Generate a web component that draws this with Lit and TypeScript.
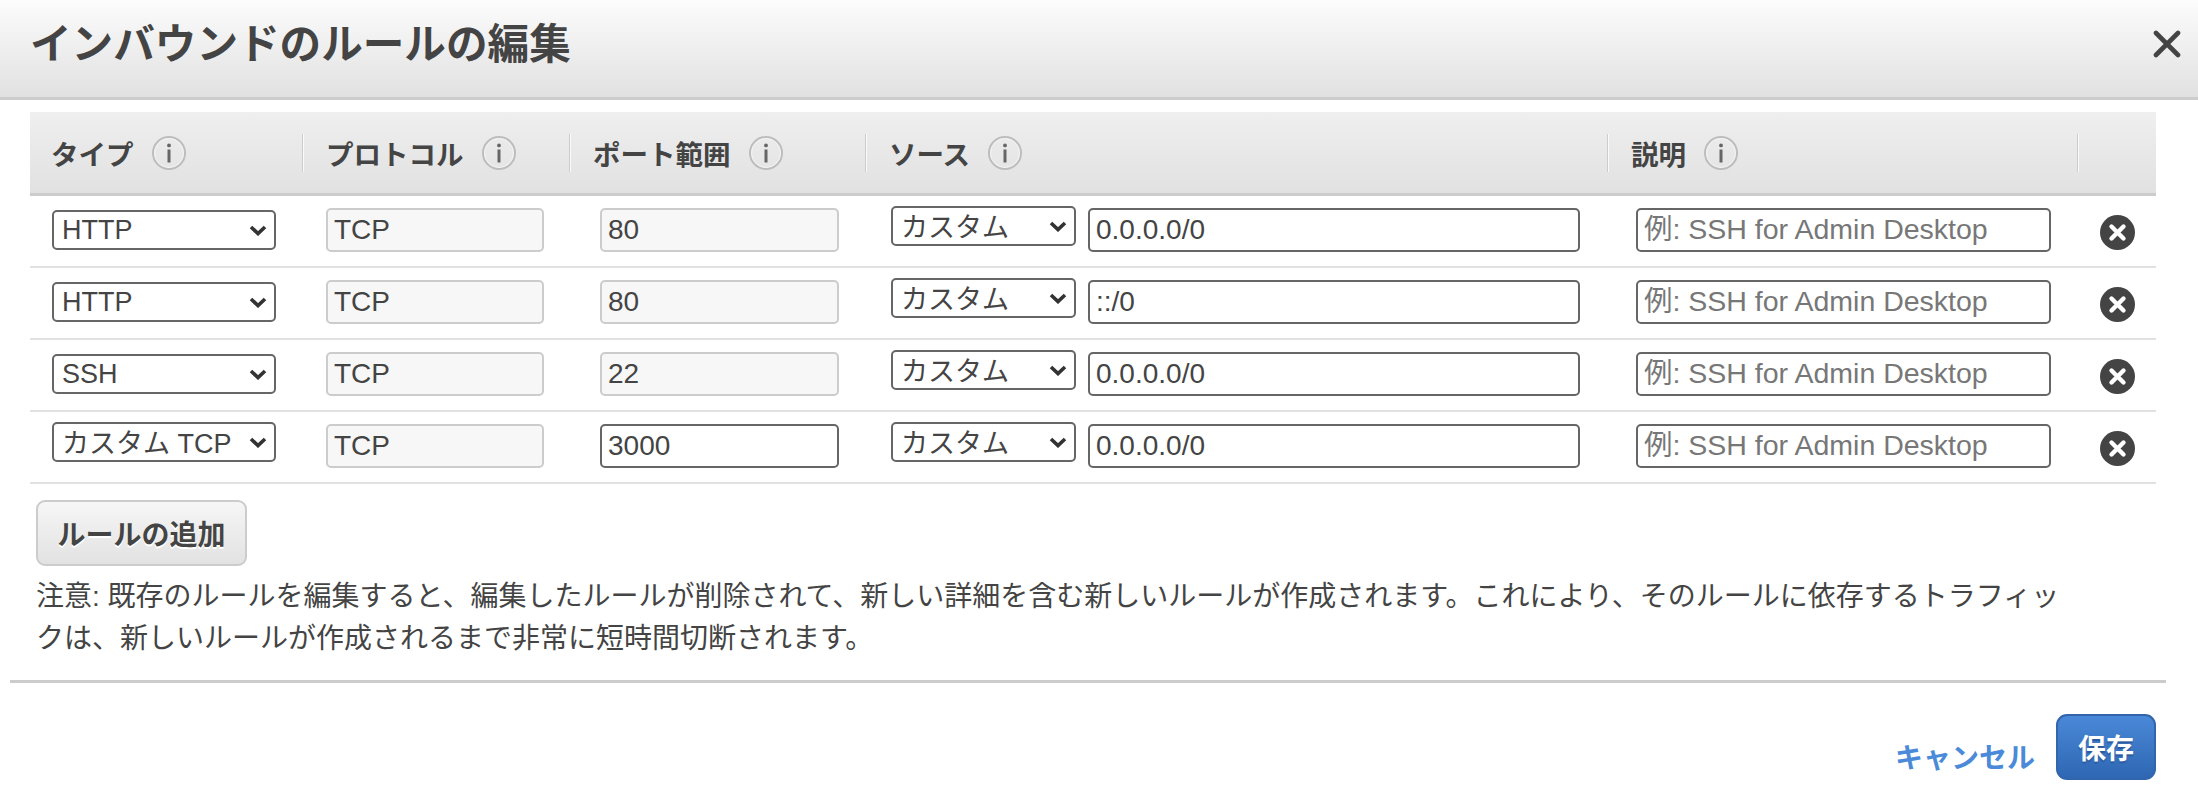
import { LitElement, html, css, svg } from 'lit';
import { customElement } from 'lit/decorators.js';

interface Rule {
  type: string;
  port: string;
  source: string;
  portEditable?: boolean;
}

const RULES: Rule[] = [
  { type: 'HTTP', port: '80', source: '0.0.0.0/0' },
  { type: 'HTTP', port: '80', source: '::/0' },
  { type: 'SSH', port: '22', source: '0.0.0.0/0' },
  { type: 'カスタム TCP', port: '3000', source: '0.0.0.0/0', portEditable: true },
];

const COLUMNS = ['タイプ', 'プロトコル', 'ポート範囲', 'ソース', '説明'];

const infoIcon = svg`<svg class="info" width="34" height="34" viewBox="0 0 34 34">
  <circle cx="17" cy="17" r="16" fill="none" stroke="#bdbdbd" stroke-width="2"/>
  <circle cx="17" cy="17" r="14.5" fill="none" stroke="#f4f4f4" stroke-width="1"/>
  <rect x="15.5" y="13.5" width="3" height="13" fill="#666"/>
  <circle cx="17" cy="9.4" r="1.9" fill="#666"/>
</svg>`;

const removeIcon = svg`<svg width="35" height="35" viewBox="0 0 35 35">
  <circle cx="17.5" cy="17.5" r="17.5" fill="#444"/>
  <path d="M11.5 11.5 23.5 23.5M23.5 11.5 11.5 23.5" stroke="#fff" stroke-width="4.4" stroke-linecap="round"/>
</svg>`;

const chevron = "url(\"data:image/svg+xml,%3Csvg xmlns='http://www.w3.org/2000/svg' width='18' height='11' viewBox='0 0 18 11'%3E%3Cpath d='M2 2 9 8.6 16 2' fill='none' stroke='%23333' stroke-width='3.6'/%3E%3C/svg%3E\")";

@customElement('app-root')
export class AppRoot extends LitElement {
  static styles = css`
    :host {
      display: block;
      height: 796px;
      overflow: hidden;
      background: #fff;
      color: #444;
      font-family: "Liberation Sans", "Noto Sans CJK JP", sans-serif;
      font-size: 28px;
    }

    .modal-header {
      display: flex;
      align-items: center;
      justify-content: space-between;
      box-sizing: border-box;
      height: 100px;
      padding: 0 17px 16px 30px;
      background: linear-gradient(#fcfcfc, #e1e1e1);
      border-bottom: 3px solid #ccc;
    }

    h1 {
      margin: 0;
      font-size: 41.6px;
      font-weight: 700;
      color: #444;
    }

    .close {
      display: block;
      margin-top: 7px;
    }

    .modal-body {
      padding: 12px 42px 0 30px;
    }

    .grid {
      display: grid;
      grid-template-columns: 272px 267px 296px 742px 470px 79px;
    }

    .head {
      box-sizing: border-box;
      height: 84px;
      background: linear-gradient(#efefef, #e1e1e1);
      border-bottom: 3px solid #ccc;
      align-items: center;
    }

    .head-cell {
      display: flex;
      align-items: center;
      gap: 18px;
      height: 38px;
      padding-left: 23px;
      font-size: 27.5px;
      font-weight: 700;
      color: #444;
      border-left: 1px solid #ccc;
      box-shadow: inset 1px 0 0 #fafafa;
    }

    .head-cell:first-child {
      padding-left: 21px;
      border-left: none;
      box-shadow: none;
    }

    .info {
      display: block;
      flex: none;
    }

    .row {
      box-sizing: border-box;
      height: 72px;
      border-bottom: 2px solid #e1e1e1;
    }

    .cell {
      display: flex;
      align-items: flex-start;
      padding-top: 12px;
    }

    .cell-type { padding-left: 22px; }
    .cell-protocol { padding-left: 24px; }
    .cell-port { padding-left: 31px; }
    .cell-source { padding-left: 26px; gap: 12px; }
    .cell-desc { padding-left: 29px; }
    .cell-remove { padding: 19px 0 0 23px; }

    select,
    input {
      box-sizing: border-box;
      margin: 0;
      font: inherit;
      color: #444;
      background-color: #fff;
      border: 2px solid #666;
      border-radius: 5px;
      outline: none;
    }

    select {
      appearance: none;
      height: 40px;
      margin-top: 2px;
      padding: 0 32px 0 8px;
      font-size: 27px;
      background-repeat: no-repeat;
      background-position: right 7px center;
    }

    select.cjk {
      margin-top: -2px;
      padding-top: 3px;
    }

    input {
      height: 44px;
      padding: 0 6px;
    }

    input::placeholder {
      color: #777;
      font-size: 28.5px;
      opacity: 1;
    }

    input[disabled] {
      background: #f7f7f7;
      border-color: #ccc;
      color: #444;
    }

    .w-type { width: 224px; }
    .w-protocol { width: 218px; }
    .w-port { width: 239px; }
    .w-source-type { width: 185px; }
    .w-source { width: 492px; }
    .w-desc { width: 415px; }

    .btn {
      box-sizing: border-box;
      display: flex;
      align-items: center;
      justify-content: center;
      font: inherit;
      font-size: 28px;
      font-weight: 700;
    }

    .add {
      width: 211px;
      height: 66px;
      margin: 16px 0 0 6px;
      color: #444;
      background: linear-gradient(#f6f6f6, #e2e2e2);
      border: 2px solid #ccc;
      border-radius: 9px;
      text-shadow: 0 2px 0 #fff;
    }

    .note {
      width: 2030px;
      margin: 10px 0 0 6px;
      line-height: 42px;
      color: #444;
    }

    .divider {
      height: 3px;
      margin: 20px 32px 0 10px;
      background: #ccc;
    }

    .footer {
      display: flex;
      justify-content: flex-end;
      align-items: center;
      gap: 21px;
      padding: 31px 42px 0 0;
    }

    .cancel {
      margin-top: 18px;
      font-size: 28px;
      font-weight: 700;
      color: #4a8ad8;
      text-decoration: none;
    }

    .save {
      width: 100px;
      height: 66px;
      color: #fff;
      background: linear-gradient(#4a88d8, #2e67b2);
      border: 2px solid #3265ac;
      border-radius: 11px;
      text-shadow: 0 2px 1px #2a5a9c;
    }
  `;

  #renderRow(rule: Rule) {
    const cjkType = rule.type !== 'HTTP' && rule.type !== 'SSH';
    return html`
      <div class="grid row">
        <div class="cell cell-type">
          <select class="w-type ${cjkType ? 'cjk' : ''}" style="background-image:${chevron}"><option>${rule.type}</option></select>
        </div>
        <div class="cell cell-protocol">
          <input class="w-protocol" disabled value="TCP" />
        </div>
        <div class="cell cell-port">
          <input class="w-port" ?disabled=${!rule.portEditable} .value=${rule.port} />
        </div>
        <div class="cell cell-source">
          <select class="w-source-type cjk" style="background-image:${chevron}"><option>カスタム</option></select>
          <input class="w-source" .value=${rule.source} />
        </div>
        <div class="cell cell-desc">
          <input class="w-desc" placeholder="例: SSH for Admin Desktop" />
        </div>
        <div class="cell cell-remove">${removeIcon}</div>
      </div>
    `;
  }

  render() {
    return html`
      <div class="modal-header">
        <h1>インバウンドのルールの編集</h1>
        <svg class="close" width="28" height="28" viewBox="0 0 28 28">
          <path d="M3 3 25 25M25 3 3 25" stroke="#444" stroke-width="4.6" stroke-linecap="round"/>
        </svg>
      </div>
      <div class="modal-body">
        <div class="grid head">
          ${COLUMNS.map((col) => html`<div class="head-cell">${col}${infoIcon}</div>`)}
          <div class="head-cell"></div>
        </div>
        ${RULES.map((rule) => this.#renderRow(rule))}
        <button class="btn add">ルールの追加</button>
        <div class="note">注意: 既存のルールを編集すると、編集したルールが削除されて、新しい詳細を含む新しいルールが作成されます。これにより、そのルールに依存するトラフィックは、新しいルールが作成されるまで非常に短時間切断されます。</div>
      </div>
      <div class="divider"></div>
      <div class="footer">
        <a class="cancel">キャンセル</a>
        <button class="btn save">保存</button>
      </div>
    `;
  }
}
